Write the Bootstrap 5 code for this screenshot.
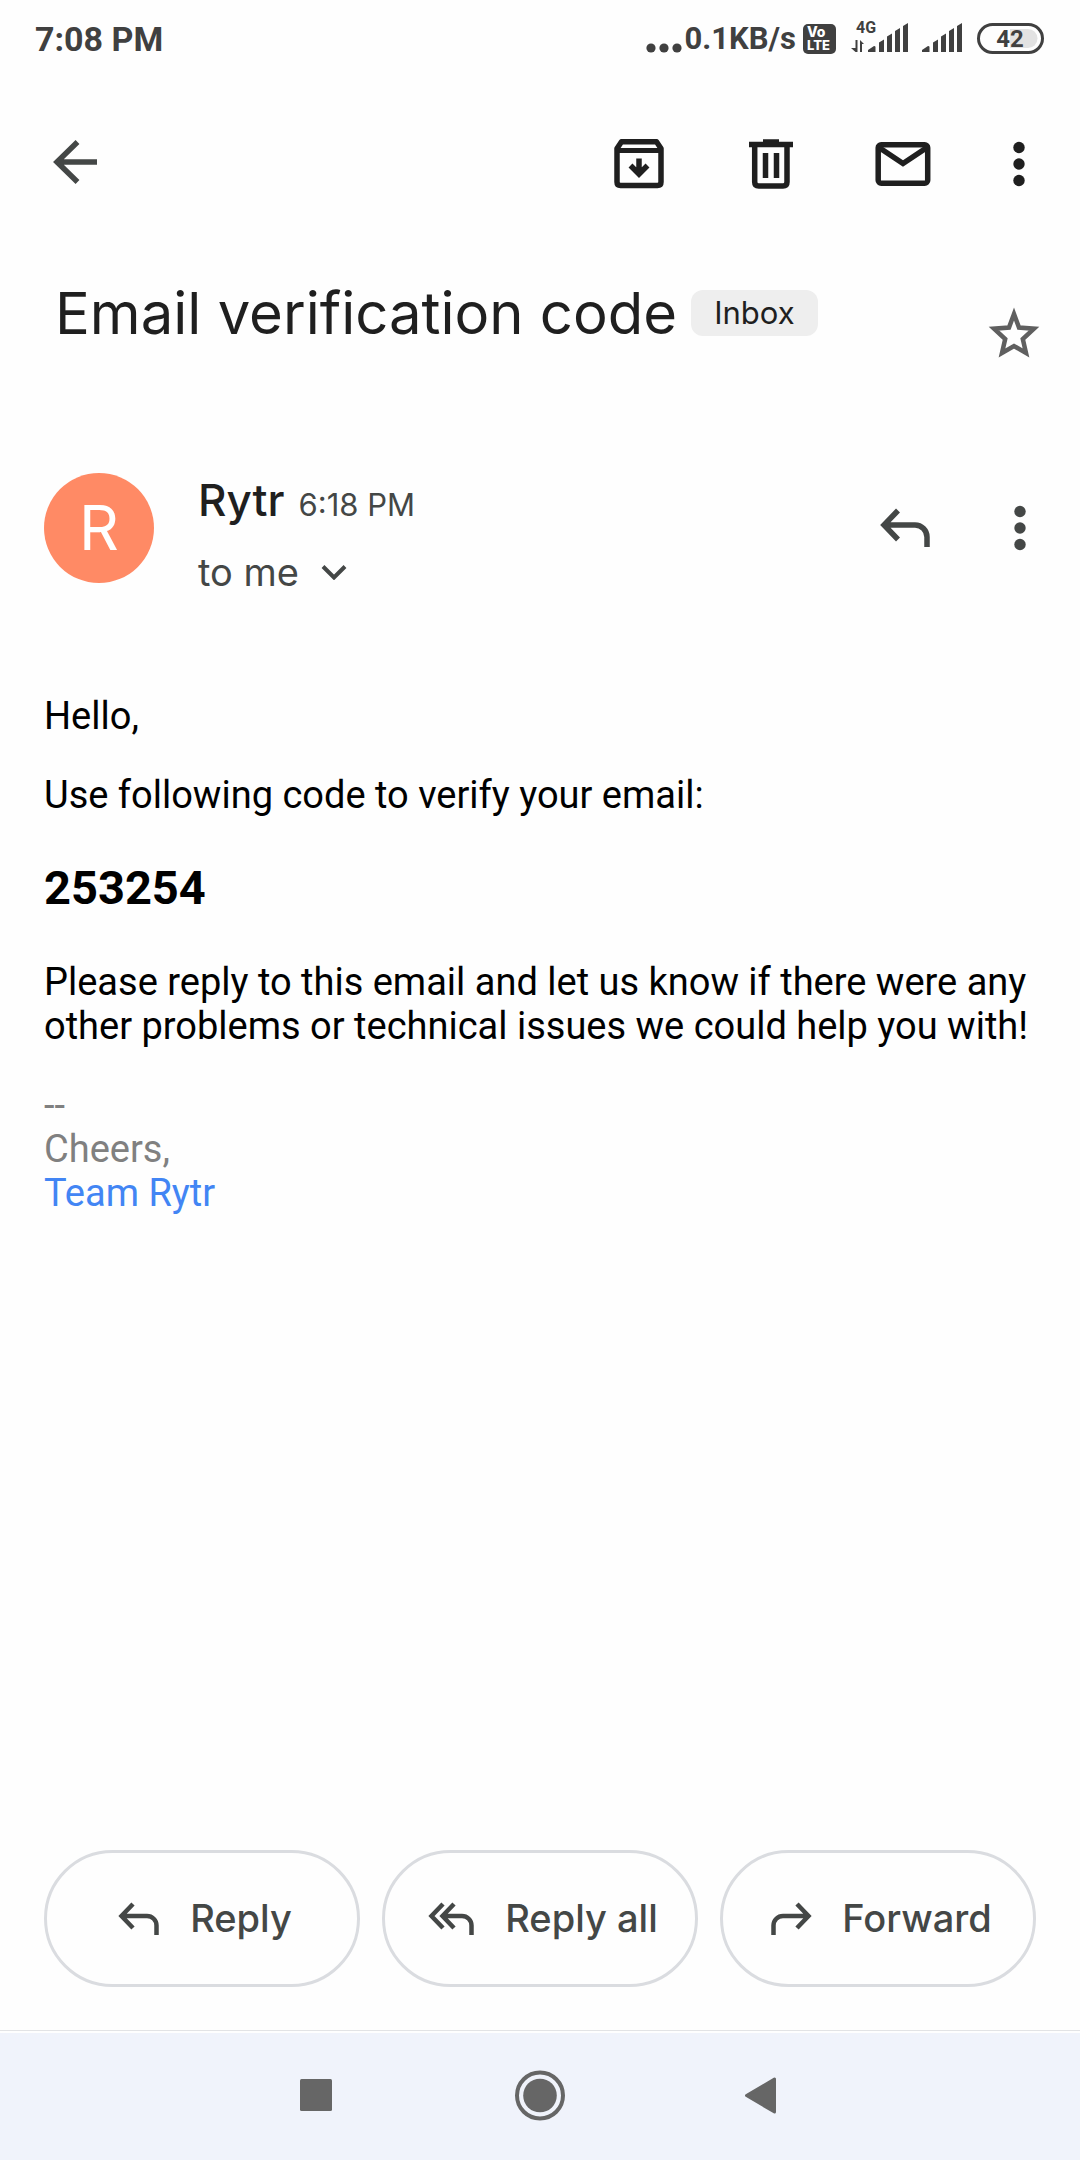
<!DOCTYPE html>
<html lang="en">
<head>
<meta charset="utf-8">
<meta name="viewport" content="width=device-width, initial-scale=1">
<title>Email verification code</title>
<link href="https://cdn.jsdelivr.net/npm/bootstrap@5.3.0/dist/css/bootstrap.min.css" rel="stylesheet">
<style>
  body { font-family: Roboto, sans-serif; background: #fefefe; color: #000; }
  svg { display: block; flex: none; }
  .ui-font { font-family: Inter, Roboto, sans-serif; }
  .ink { color: #1f1f1f; }
  .ink-soft { color: #444746; }
  .icon-btn { padding: 0; border: 0; line-height: 0; border-radius: 8px; }

  .status-bar { height: 78px; padding: 0 35px; color: #404040; }
  .clock { font-size: 34px; font-weight: 700; line-height: 44px; }
  .net-speed { font-size: 31px; font-weight: 700; line-height: 44px; }

  .toolbar { height: 172px; padding: 0 49px 0 47px; }
  .toolbar-actions { gap: 76px; }

  .subject-row { min-height: 168px; padding: 0 38px 0 55px; }
  .subject-line { gap: 14px; padding-top: 26px; }
  .subject { font-size: 58px; font-weight: 400; line-height: 74px; margin: 0; }
  .folder-chip { background: #eee; border-radius: 12px; font-size: 31px; line-height: 46px; padding: 0 23px; }

  .sender-row { padding: 40px 44px 0; }
  .avatar { width: 110px; height: 110px; background: #ff8a65; font-size: 62px; line-height: 110px; }
  .sender-info { padding-left: 44px; row-gap: 20px; line-height: 52px; }
  .sender-head { gap: 14px; height: 52px; }
  .sender-name { font-size: 44px; font-weight: 500; }
  .sent-time { font-size: 31px; }
  .recipient { font-size: 38px; line-height: 52px; gap: 22px; }
  .sender-actions { gap: 76px; margin-right: 4px; }

  .message { padding: 96px 44px 44px; font-size: 38px; line-height: 44px; }
  .message p { margin: 0 0 35px; }
  .message h2 { font-size: 47px; font-weight: 700; line-height: 55px; margin: 43px 0 45px; }
  .signature { color: #808080; }
  .signature a { color: #4285f4; text-decoration: none; }

  .replies { gap: 22px; padding: 0 44px 43px; }
  .reply-btn { flex: 1 1 0; height: 137px; border: 3px solid #dadce0; font-size: 38px; font-weight: 500; gap: 30px; padding: 0 0 0 6px; }

  .system-nav { border-top: 1px solid #e2e3e5; padding-top: 2px; }
  .system-keys { height: 127px; background: #f0f3fb; gap: 164px; }
</style>
<script src="https://cdn.jsdelivr.net/npm/bootstrap@5.3.0/dist/js/bootstrap.bundle.min.js"></script>
</head>
<body class="d-flex flex-column min-vh-100">

<header>
  <div class="status-bar d-flex align-items-center justify-content-between">
    <div class="clock">7:08 PM</div>
    <div class="d-flex align-items-center">
      <svg width="39" height="44" viewBox="0 0 39 44" fill="currentColor" aria-hidden="true"><circle cx="5" cy="31" r="4.6"/><circle cx="18" cy="31" r="4.6"/><circle cx="31" cy="31" r="4.6"/></svg>
      <span class="net-speed">0.1KB/s</span>
      <svg class="ms-1" width="50" height="44" viewBox="0 0 50 44" role="img" aria-label="VoLTE"><rect x="3" y="7" width="33" height="30" rx="5" fill="#404040"/><g fill="#fff" font-family="Inter, sans-serif" font-weight="800"><text x="7" y="20" font-size="14">Vo</text><text x="7" y="33" font-size="13">LTE</text></g></svg>
      <svg width="64" height="44" viewBox="0 0 64 44" fill="currentColor" role="img" aria-label="4G signal">
        <text x="6" y="16" font-size="16" font-weight="700" font-family="Roboto, sans-serif">4G</text>
        <path d="M5.500 23h2v12h-2l-4.500-4h4.500zM10 35V23l4 4h-2v8z"/>
        <path d="M18 35v-2l6-4q1.500 0 1.500 1v5zM29 35V25.500l5-3V35zM37 35V19.500l5-3V35zM45 35V14l5-3v24zM53 35V9l5-3v29z"/>
      </svg>
      <svg width="62" height="44" viewBox="0 0 62 44" fill="currentColor" role="img" aria-label="Signal">
        <path d="M8 35v-2l6-4q1.500 0 1.500 1v5zM19 35V25.500l5-3V35zM27 35V19.500l5-3V35zM35 35V14l5-3v24zM43 35V9l5-3v29z"/>
      </svg>
      <svg width="69" height="44" viewBox="0 0 69 44" role="img" aria-label="Battery 42 percent"><rect x="2.500" y="7.500" width="64" height="28" rx="14" fill="none" stroke="#404040" stroke-width="3"/><path d="M34 12h18a9.500 9.500 0 0 1 0 19H34z" fill="#e2e2e2"/><text x="34" y="30" text-anchor="middle" font-size="24" font-weight="700" font-family="Roboto, sans-serif" fill="#404040">42</text></svg>
    </div>
  </div>

  <nav class="toolbar d-flex align-items-center justify-content-between" aria-label="Message actions">
    <button type="button" class="btn icon-btn ink-soft" aria-label="Back"><svg width="56" height="56" viewBox="0 0 56 56" fill="none" stroke="currentColor" stroke-width="5.500"><path d="M50 26H10M30.500 6L10 26l20.500 20"/></svg></button>
    <div class="toolbar-actions d-flex align-items-center ink">
      <button type="button" class="btn icon-btn ink" aria-label="Archive"><svg width="56" height="56" viewBox="0 0 56 56" fill="none" stroke="currentColor"><path stroke-width="5.500" d="M6 12.500V46q0 3.500 3.500 3.500H46.500q3.500 0 3.500-3.500V12.500L45.500 5.800H10.500z" stroke-linejoin="round"/><path fill="currentColor" stroke="none" d="M5 12h46v5H5z"/><path stroke-width="5.500" d="M28 22.500V37M19.500 29.500l8.500 8.500 8.500-8.500"/></svg></button>
      <button type="button" class="btn icon-btn ink" aria-label="Delete"><svg width="56" height="56" viewBox="0 0 56 56" fill="none" stroke="currentColor" stroke-width="5.500"><path d="M6 8.500h44M20 6h16" /><path d="M11.700 8V46q0 4 4 4H40q4 0 4-4V8M22.500 17V42M33.500 17V42"/></svg></button>
      <button type="button" class="btn icon-btn ink" aria-label="Mark unread"><svg width="56" height="56" viewBox="0 0 56 56" fill="none" stroke="currentColor" stroke-width="5.500"><rect x="3.200" y="8.700" width="49.500" height="38.500" rx="3"/><path d="M4 11.500L28 27.500 52 11.500"/></svg></button>
      <button type="button" class="btn icon-btn ink" aria-label="More options"><svg width="24" height="56" viewBox="0 0 24 56" fill="currentColor"><circle cx="12" cy="11.500" r="5.700"/><circle cx="12" cy="28" r="5.700"/><circle cx="12" cy="44.500" r="5.700"/></svg></button>
    </div>
  </nav>
</header>

<main class="flex-grow-1">
  <section class="subject-row d-flex justify-content-between">
    <div class="subject-line d-flex align-items-center align-self-start ui-font ink">
      <h1 class="subject">Email verification code</h1>
      <span class="folder-chip">Inbox</span>
    </div>
    <button type="button" class="btn icon-btn align-self-center" aria-label="Star"><svg width="56" height="56" viewBox="0 0 56 56" fill="none" stroke="#5f5f5f" stroke-width="4.500"><path d="M28 8L33 21.500l15 1.200L36.800 33l3.200 14L28 40 16 47l3.200-14L8 22.700l15-1.200z"/></svg></button>
  </section>

  <section class="sender-row d-flex align-items-center ui-font">
    <div class="avatar rounded-circle text-white text-center flex-shrink-0" aria-hidden="true">R</div>
    <div class="sender-info d-flex flex-column align-items-start flex-grow-1 pt-3">
      <div class="sender-head d-flex align-items-baseline"><span class="sender-name ink">Rytr</span><span class="sent-time ink-soft">6:18 PM</span></div>
      <button type="button" class="btn p-0 border-0 recipient ink-soft d-flex align-items-center">to me
        <svg width="26" height="16" viewBox="0 0 26 16" fill="none" stroke="currentColor" stroke-width="4"><path d="M2 2.500l11 11 11-11"/></svg></button>
    </div>
    <div class="sender-actions d-flex align-items-center">
      <button type="button" class="btn icon-btn ink-soft" aria-label="Reply"><svg width="56" height="44" viewBox="0 0 56 44" fill="none" stroke="currentColor" stroke-width="5.500"><path d="M22 4.500L8 19l14 14.500M8 19h31a12 12 0 0 1 12 12v10"/></svg></button>
      <button type="button" class="btn icon-btn ink-soft" aria-label="More message options"><svg width="24" height="56" viewBox="0 0 24 56" fill="currentColor"><circle cx="12" cy="11.500" r="5.700"/><circle cx="12" cy="28" r="5.700"/><circle cx="12" cy="44.500" r="5.700"/></svg></button>
    </div>
  </section>

  <article class="message">
    <p>Hello,</p>
    <p>Use following code to verify your email:</p>
    <h2>253254</h2>
    <p>Please reply to this email and let us know if there were any other problems or technical issues we could help you with!</p>
    <div class="signature">--<br>Cheers,<br><a href="#">Team Rytr</a></div>
  </article>
</main>

<footer>
  <div class="replies d-flex ui-font">
    <button type="button" class="btn reply-btn rounded-pill ink-soft d-flex align-items-center justify-content-center"><svg width="42" height="36" viewBox="0 0 42 36" fill="none" stroke="currentColor" stroke-width="4.500"><path d="M15 3L3.500 15 15 27M3.500 15H29a9.500 9.500 0 0 1 9.500 9.500V34"/></svg>Reply</button>
    <button type="button" class="btn reply-btn rounded-pill ink-soft d-flex align-items-center justify-content-center"><svg width="47" height="36" viewBox="0 0 47 36" fill="none" stroke="currentColor" stroke-width="4.500"><path d="M15 3L3.500 15 15 27M26 3L14.500 15 26 27M14.500 15H34a9.500 9.500 0 0 1 9.500 9.500V34"/></svg>Reply all</button>
    <button type="button" class="btn reply-btn rounded-pill ink-soft d-flex align-items-center justify-content-center"><svg width="42" height="36" viewBox="0 0 42 36" fill="none" stroke="currentColor" stroke-width="4.500"><path d="M27 3l11.500 12L27 27M38.500 15H13a9.500 9.500 0 0 0-9.500 9.500V34"/></svg>Forward</button>
  </div>
  <nav class="system-nav" aria-label="System">
    <div class="system-keys d-flex align-items-center justify-content-center">
      <button type="button" class="btn icon-btn" aria-label="Recent apps"><svg width="56" height="56" viewBox="0 0 56 56" fill="#666"><rect x="8" y="10" width="32" height="32" rx="1.500"/></svg></button>
      <button type="button" class="btn icon-btn" aria-label="Home"><svg width="56" height="56" viewBox="0 0 56 56" fill="#666"><circle cx="28" cy="26.500" r="16.800"/><circle cx="28" cy="26.500" r="23" fill="none" stroke="#666" stroke-width="4"/></svg></button>
      <button type="button" class="btn icon-btn" aria-label="Back key"><svg width="56" height="56" viewBox="0 0 56 56" fill="#666" stroke="#666" stroke-width="3" stroke-linejoin="round"><path d="M14.500 26.500L42.500 10v33z"/></svg></button>
    </div>
  </nav>
</footer>
</body>
</html>
